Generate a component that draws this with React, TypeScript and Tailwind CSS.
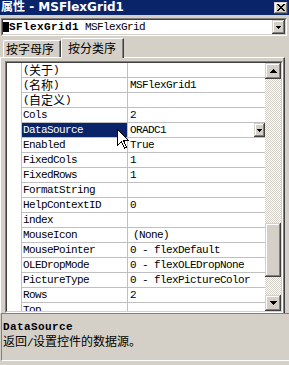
import React from "react";

const MONO = "font-['Liberation_Mono',monospace] text-[11px] tracking-[-0.6px]";
const RAISED =
  "shadow-[inset_-1px_-1px_#404040,inset_1px_1px_#d4d0c8,inset_-2px_-2px_#808080,inset_2px_2px_#ffffff]";

function C({ children }: { children: React.ReactNode }) {
  return (
    <span className="inline-block align-top h-[14px] leading-[14px] font-['Noto_Sans_CJK_SC',sans-serif] text-[12px] tracking-normal">
      {children}
    </span>
  );
}

function Tri({ up, w = 7 }: { up?: boolean; w?: number }) {
  const rows = Math.ceil(w / 2);
  const rects = [];
  for (let i = 0; i < rows; i++) {
    const y = up ? rows - 1 - i : i;
    rects.push(<rect key={i} x={i} y={y} width={w - 2 * i} height={1} fill="#000" />);
  }
  return (
    <svg width={w} height={rows} viewBox={`0 0 ${w} ${rows}`} shapeRendering="crispEdges">
      {rects}
    </svg>
  );
}

type Row = { name: React.ReactNode; value?: React.ReactNode; sel?: boolean; dd?: boolean };

export default function App() {
  const rows: Row[] = [
    { name: <>(<C>关于</C>)</> },
    { name: <>(<C>名称</C>)</>, value: "MSFlexGrid1" },
    { name: <>(<C>自定义</C>)</> },
    { name: "Cols", value: "2" },
    { name: "DataSource", value: "ORADC1", sel: true, dd: true },
    { name: "Enabled", value: "True" },
    { name: "FixedCols", value: "1" },
    { name: "FixedRows", value: "1" },
    { name: "FormatString" },
    { name: "HelpContextID", value: "0" },
    { name: "index" },
    { name: "MouseIcon", value: <span className="pl-[3px]">(None)</span> },
    { name: "MousePointer", value: "0 - flexDefault" },
    { name: "OLEDropMode", value: "0 - flexOLEDropNone" },
    { name: "PictureType", value: "0 - flexPictureColor" },
    { name: "Rows", value: "2" },
    { name: "Top" },
  ];

  return (
    <div className="relative w-[289px] h-[365px] overflow-hidden bg-[#d4d0c8] flex flex-col text-black">
      {/* Title bar */}
      <div className="h-[15px] shrink-0 bg-[#0a246a] flex items-center justify-between pl-[1px] pr-[1px]">
        <span className="text-white font-bold text-[12px] leading-[15px] font-['DejaVu_Sans','Noto_Sans_CJK_SC',sans-serif] whitespace-pre">
          属性 - MSFlexGrid1
        </span>
        <div className={`w-[14px] h-[12px] bg-[#d4d0c8] ${RAISED} flex items-center justify-center`}>
          <svg width="8" height="7" viewBox="0 0 8 7" shapeRendering="crispEdges">
            <path d="M0 0h2v1h-2zM6 0h2v1h-2zM1 1h2v1h-2zM5 1h2v1h-2zM2 2h4v1h-4zM3 3h2v1h-2zM2 4h4v1h-4zM1 5h2v1h-2zM5 5h2v1h-2zM0 6h2v1h-2zM6 6h2v1h-2z" fill="#000" />
          </svg>
        </div>
      </div>

      {/* Object combo */}
      <div className="mt-[3px] ml-[1px] w-[286px] h-[18px] shrink-0 border border-t-[#808080] border-l-[#808080] border-b-white border-r-white">
        <div className="h-full border border-t-[#404040] border-l-[#404040] border-b-[#d4d0c8] border-r-[#d4d0c8] bg-white flex items-center">
          <span className={`${MONO} leading-[14px] whitespace-pre flex items-center`}>
            <span className="inline-block w-[6px] h-[10px] bg-black text-black overflow-hidden leading-[10px]">M</span>
            <span className="font-bold tracking-[0.4px]">SFlexGrid1</span>
            <span> MSFlexGrid</span>
          </span>
          <div className={`ml-auto w-[13px] h-full bg-[#d4d0c8] ${RAISED} flex items-center justify-center`}>
            <Tri w={5} />
          </div>
        </div>
      </div>

      {/* Tabs */}
      <div className="mt-[2px] h-[19px] shrink-0 flex items-end pl-[3px]">
        <div className="w-[58px] h-[17px] border-l border-t border-r border-l-white border-t-white border-r-[#404040] shadow-[inset_-1px_0_#808080] rounded-tl-[2px] flex items-center pl-[2px]">
          <span className="font-['Noto_Sans_CJK_SC',sans-serif] text-[12px] leading-[14px]">按字母序</span>
        </div>
        <div className="relative z-10 w-[63px] h-[20px] mb-[-1px] bg-[#d4d0c8] border-l border-t border-r border-l-white border-t-white border-r-[#404040] shadow-[inset_-1px_0_#808080] rounded-tl-[2px] flex items-start pt-[2px] pl-[6px]">
          <span className="font-['Noto_Sans_CJK_SC',sans-serif] text-[12px] leading-[14px]">按分类序</span>
        </div>
      </div>

      {/* Tab page */}
      <div className="w-[285px] h-[256px] shrink-0 border-t border-l border-r border-t-white border-l-white border-r-[#404040] shadow-[inset_-1px_0_#808080] pt-[3px] pl-[4px]">
        <div className="w-[278px] h-[252px] border border-t-[#808080] border-l-[#808080] border-b-white border-r-white">
          <div className="h-full border border-t-[#404040] border-l-[#404040] border-b-[#d4d0c8] border-r-[#d4d0c8] flex">
            {/* gutter */}
            <div className="w-[14px] h-full bg-white" />
            {/* rows */}
            <div className="w-[244px] h-full bg-white flex flex-col overflow-hidden">
              {rows.map((r, i) => (
                <div key={i} className="flex h-[15px] shrink-0">
                  <div
                    className={`w-[107px] h-full border-l border-r border-b border-[#c0c0c0] pl-[1px] ${MONO} leading-[14px] whitespace-pre overflow-hidden ${
                      r.sel ? "bg-[#0a246a] text-white" : ""
                    }`}
                  >
                    {r.name}
                  </div>
                  <div className={`w-[137px] h-full border-b border-[#c0c0c0] pl-[2px] ${MONO} leading-[14px] whitespace-pre flex overflow-hidden`}>
                    <span>{r.value}</span>
                    {r.dd && (
                      <div className={`ml-auto w-[11px] h-[14px] bg-[#d4d0c8] ${RAISED} flex items-center justify-center`}>
                        <Tri w={5} />
                      </div>
                    )}
                  </div>
                </div>
              ))}
            </div>
            {/* scrollbar */}
            <div className="w-[16px] h-full flex flex-col">
              <div className={`h-[16px] shrink-0 bg-[#d4d0c8] ${RAISED} flex items-center justify-center`}>
                <Tri up />
              </div>
              <div className="flex-1 bg-[repeating-conic-gradient(#ffffff_0_25%,#d4d0c8_0_50%)] bg-[length:2px_2px] flex flex-col">
                <div className={`mt-[144px] h-[54px] bg-[#d4d0c8] ${RAISED}`} />
              </div>
              <div className={`h-[16px] shrink-0 bg-[#d4d0c8] ${RAISED} flex items-center justify-center`}>
                <Tri />
              </div>
            </div>
          </div>
        </div>
      </div>

      {/* Description */}
      <div className="ml-[1px] h-[48px] shrink-0 border-t border-l border-b border-t-[#808080] border-l-[#808080] border-b-white pt-[7px] pl-[1px]">
        <div className="font-['Liberation_Mono',monospace] text-[11px] font-bold tracking-[0.4px] leading-[13px]">DataSource</div>
        <div className="h-[14px] font-['Noto_Sans_CJK_SC',sans-serif] text-[12px] leading-[14px] whitespace-pre">
          返回<span className="font-['Liberation_Mono',monospace] text-[11px] tracking-[-0.6px]">/</span>设置控件的数据源。
        </div>
      </div>

      {/* Mouse cursor */}
      <svg className="absolute left-[117px] top-[129px]" width="12" height="20" viewBox="0 0 12 20" shapeRendering="crispEdges">
        <path d="M0.5 0.5 L0.5 16.5 L4.5 12.5 L7.5 19 L9.5 18 L6.5 11.5 L11.5 11.5 Z" fill="#fff" stroke="#000" strokeWidth="1" />
      </svg>
    </div>
  );
}
